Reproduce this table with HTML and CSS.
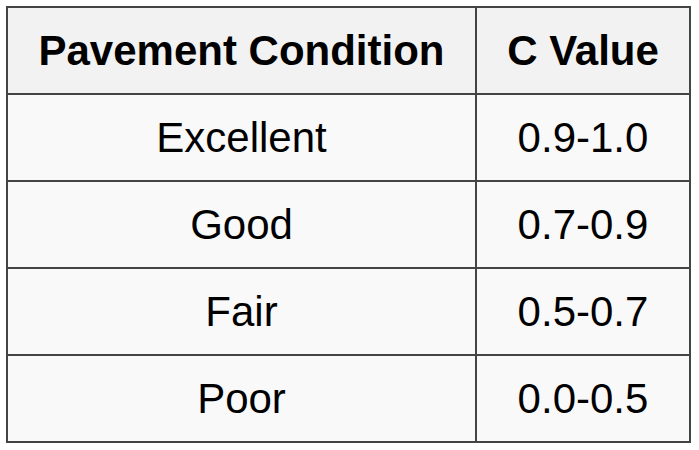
FILE: index.html
```html
<!DOCTYPE html>
<html>
<head>
<meta charset="utf-8">
<link rel="stylesheet" href="styles.css">
</head>
<body>
<table class="ctable">
  <thead>
    <tr><th class="c1">Pavement Condition</th><th class="c2">C Value</th></tr>
  </thead>
  <tbody>
    <tr><td>Excellent</td><td>0.9-1.0</td></tr>
    <tr><td>Good</td><td>0.7-0.9</td></tr>
    <tr><td>Fair</td><td>0.5-0.7</td></tr>
    <tr><td>Poor</td><td>0.0-0.5</td></tr>
  </tbody>
</table>
</body>
</html>
```
FILE: styles.css
```css
html, body {
  margin: 0;
  padding: 0;
  background: #ffffff;
}
body {
  padding: 6px;
  font-family: "Liberation Sans", Arial, sans-serif;
  color: #000;
}
.ctable {
  border-collapse: separate;
  border-spacing: 0;
  border-top: 2px solid #444;
  border-left: 2px solid #444;
  width: 685px;
  table-layout: fixed;
}
.ctable th, .ctable td {
  border-right: 2px solid #444;
  border-bottom: 2px solid #444;
  height: 85px;
  padding: 0;
  text-align: center;
  vertical-align: middle;
  font-size: 42px;
  line-height: 48px;
}
.ctable th {
  background: #f2f2f2;
  font-weight: bold;
}
.ctable td {
  background: #f9f9f9;
}
.c1 { width: 467px; }
.c2 { width: 212px; }
```
